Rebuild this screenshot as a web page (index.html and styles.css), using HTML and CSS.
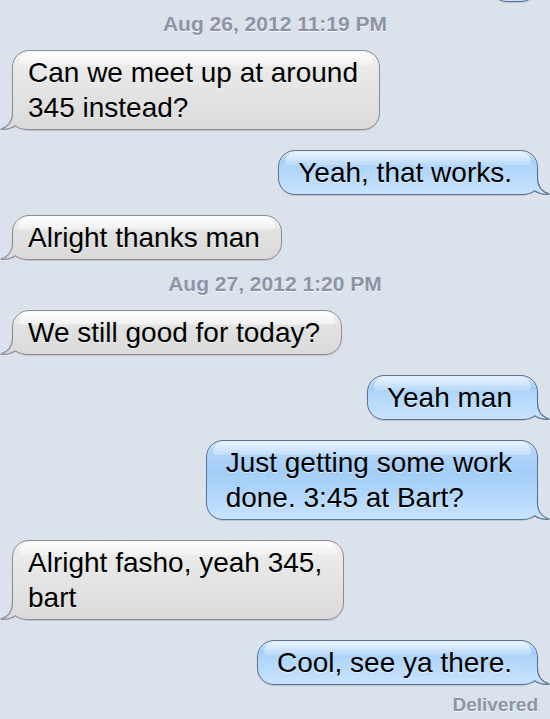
FILE: index.html
```html
<!DOCTYPE html>
<html lang="en">
<head>
<meta charset="utf-8">
<title>Messages</title>
<link rel="stylesheet" href="styles.css">
</head>
<body>
<svg class="defs" width="0" height="0" aria-hidden="true">
  <defs>
    <linearGradient id="gGrey" gradientUnits="userSpaceOnUse" x1="0" y1="-1" x2="0" y2="29">
      <stop offset="0" stop-color="#e2e2e2"/>
      <stop offset="1" stop-color="#dadada"/>
    </linearGradient>
    <linearGradient id="gBlue" gradientUnits="userSpaceOnUse" x1="0" y1="-1" x2="0" y2="29">
      <stop offset="0" stop-color="#acd3f9"/>
      <stop offset="1" stop-color="#c8e3fd"/>
    </linearGradient>
  </defs>
</svg>

<div class="thread">
  <div class="msg sent prev">
    <div class="bubble"><span class="text">&nbsp;</span></div>
  </div>

  <div class="stamp first">Aug 26, 2012 11:19 PM</div>

  <div class="msg recv">
    <div class="bubble">
      <svg class="tail" viewBox="0 0 32 30"><path class="tail-fill" d="M12.5 6 V13 C12.5 21 9 26.5 0.5 29.3 C6 29.9 11.5 28.4 15.5 25.8 C18.5 28.3 22 29.5 28 29.5 L32 29.5 L32 6 Z"/><path class="tail-line" d="M12.5 6 V13 C12.5 21 9 26.5 0.5 29.3 C6 29.9 11.5 28.4 15.5 25.8 C18.5 28.3 22 29.5 28 29.5 L32 29.5"/></svg>
      <span class="text">Can we meet up at around<br>345 instead?</span>
    </div>
  </div>

  <div class="msg sent">
    <div class="bubble">
      <svg class="tail" viewBox="0 0 32 30"><path class="tail-fill" d="M12.5 6 V13 C12.5 21 9 26.5 0.5 29.3 C6 29.9 11.5 28.4 15.5 25.8 C18.5 28.3 22 29.5 28 29.5 L32 29.5 L32 6 Z"/><path class="tail-line" d="M12.5 6 V13 C12.5 21 9 26.5 0.5 29.3 C6 29.9 11.5 28.4 15.5 25.8 C18.5 28.3 22 29.5 28 29.5 L32 29.5"/></svg>
      <span class="text">Yeah, that works.</span>
    </div>
  </div>

  <div class="msg recv">
    <div class="bubble">
      <svg class="tail" viewBox="0 0 32 30"><path class="tail-fill" d="M12.5 6 V13 C12.5 21 9 26.5 0.5 29.3 C6 29.9 11.5 28.4 15.5 25.8 C18.5 28.3 22 29.5 28 29.5 L32 29.5 L32 6 Z"/><path class="tail-line" d="M12.5 6 V13 C12.5 21 9 26.5 0.5 29.3 C6 29.9 11.5 28.4 15.5 25.8 C18.5 28.3 22 29.5 28 29.5 L32 29.5"/></svg>
      <span class="text">Alright thanks man</span>
    </div>
  </div>

  <div class="stamp">Aug 27, 2012 1:20 PM</div>

  <div class="msg recv">
    <div class="bubble">
      <svg class="tail" viewBox="0 0 32 30"><path class="tail-fill" d="M12.5 6 V13 C12.5 21 9 26.5 0.5 29.3 C6 29.9 11.5 28.4 15.5 25.8 C18.5 28.3 22 29.5 28 29.5 L32 29.5 L32 6 Z"/><path class="tail-line" d="M12.5 6 V13 C12.5 21 9 26.5 0.5 29.3 C6 29.9 11.5 28.4 15.5 25.8 C18.5 28.3 22 29.5 28 29.5 L32 29.5"/></svg>
      <span class="text">We still good for today?</span>
    </div>
  </div>

  <div class="msg sent">
    <div class="bubble">
      <svg class="tail" viewBox="0 0 32 30"><path class="tail-fill" d="M12.5 6 V13 C12.5 21 9 26.5 0.5 29.3 C6 29.9 11.5 28.4 15.5 25.8 C18.5 28.3 22 29.5 28 29.5 L32 29.5 L32 6 Z"/><path class="tail-line" d="M12.5 6 V13 C12.5 21 9 26.5 0.5 29.3 C6 29.9 11.5 28.4 15.5 25.8 C18.5 28.3 22 29.5 28 29.5 L32 29.5"/></svg>
      <span class="text">Yeah man</span>
    </div>
  </div>

  <div class="msg sent">
    <div class="bubble">
      <svg class="tail" viewBox="0 0 32 30"><path class="tail-fill" d="M12.5 6 V13 C12.5 21 9 26.5 0.5 29.3 C6 29.9 11.5 28.4 15.5 25.8 C18.5 28.3 22 29.5 28 29.5 L32 29.5 L32 6 Z"/><path class="tail-line" d="M12.5 6 V13 C12.5 21 9 26.5 0.5 29.3 C6 29.9 11.5 28.4 15.5 25.8 C18.5 28.3 22 29.5 28 29.5 L32 29.5"/></svg>
      <span class="text">Just getting some work<br>done. 3:45 at Bart?</span>
    </div>
  </div>

  <div class="msg recv">
    <div class="bubble">
      <svg class="tail" viewBox="0 0 32 30"><path class="tail-fill" d="M12.5 6 V13 C12.5 21 9 26.5 0.5 29.3 C6 29.9 11.5 28.4 15.5 25.8 C18.5 28.3 22 29.5 28 29.5 L32 29.5 L32 6 Z"/><path class="tail-line" d="M12.5 6 V13 C12.5 21 9 26.5 0.5 29.3 C6 29.9 11.5 28.4 15.5 25.8 C18.5 28.3 22 29.5 28 29.5 L32 29.5"/></svg>
      <span class="text">Alright fasho, yeah 345,<br>bart</span>
    </div>
  </div>

  <div class="msg sent">
    <div class="bubble">
      <svg class="tail" viewBox="0 0 32 30"><path class="tail-fill" d="M12.5 6 V13 C12.5 21 9 26.5 0.5 29.3 C6 29.9 11.5 28.4 15.5 25.8 C18.5 28.3 22 29.5 28 29.5 L32 29.5 L32 6 Z"/><path class="tail-line" d="M12.5 6 V13 C12.5 21 9 26.5 0.5 29.3 C6 29.9 11.5 28.4 15.5 25.8 C18.5 28.3 22 29.5 28 29.5 L32 29.5"/></svg>
      <span class="text">Cool, see ya there.</span>
    </div>
  </div>

  <div class="delivered">Delivered</div>
</div>
</body>
</html>
```

FILE: styles.css
```css
html, body {
  margin: 0;
  padding: 0;
}

body {
  background: #dbe2ec;
  font-family: "Liberation Sans", Arial, Helvetica, sans-serif;
  overflow: hidden;
  width: 550px;
  height: 719px;
}

.defs {
  position: absolute;
  width: 0;
  height: 0;
}

.thread {
  display: flex;
  flex-direction: column;
  padding: 0 12px;
}

.msg {
  display: flex;
  margin-top: 20px;
}

.msg.recv {
  justify-content: flex-start;
}

.msg.sent {
  justify-content: flex-end;
}

.msg.prev {
  margin-top: -43px;
}

.prev .bubble {
  width: 48px;
}

.bubble {
  position: relative;
  box-sizing: border-box;
  border: 1px solid;
  border-radius: 17px;
  padding-top: 4px;
  padding-bottom: 4px;
  font-size: 28px;
  line-height: 35px;
  color: #000;
  white-space: nowrap;
  box-shadow: 0 1px 1px rgba(0, 0, 0, 0.14), inset 0 1px 0 rgba(255, 255, 255, 0.6);
}

.bubble::before {
  content: "";
  position: absolute;
  top: 1px;
  left: 6px;
  right: 6px;
  height: 13px;
  border-radius: 13px 13px 5px 5px;
}

.text {
  position: relative;
  text-shadow: 0 1px 0 rgba(255, 255, 255, 0.55);
}

.recv .bubble {
  padding-left: 15px;
  padding-right: 21px;
  border-color: #8a8d94;
  background: linear-gradient(to top, #dadada 0px, #e2e2e2 30px, #e8e8e8 70%, #efefef 100%);
}

.recv .bubble::before {
  background: linear-gradient(rgba(255, 255, 255, 0.9), rgba(255, 255, 255, 0.3));
}

.sent .bubble {
  padding-left: 19px;
  padding-right: 25px;
  border-color: #5b7093;
  background: linear-gradient(to top, #c8e3fd 0px, #acd3f9 30px, #a4cdf7 62%, #b7d9fb 100%);
}

.sent .bubble::before {
  background: linear-gradient(rgba(240, 248, 255, 0.85), rgba(230, 243, 255, 0.3));
}

.tail {
  position: absolute;
  bottom: -1px;
  width: 32px;
  height: 30px;
  overflow: visible;
}

.recv .tail {
  left: -13px;
}

.sent .tail {
  right: -13px;
  transform: scaleX(-1);
}

.tail-line {
  fill: none;
  stroke-width: 1.1;
}

.recv .tail-fill {
  fill: url(#gGrey);
}

.recv .tail-line {
  stroke: #8a8d94;
}

.sent .tail-fill {
  fill: url(#gBlue);
}

.sent .tail-line {
  stroke: #5b7093;
}

.stamp {
  margin-top: 12px;
  text-align: center;
  font-weight: bold;
  font-size: 21px;
  line-height: 24px;
  color: #8c94a6;
  text-shadow: 0 1px 0 rgba(255, 255, 255, 0.8);
}

.stamp.first {
  margin-top: 10px;
}

.stamp + .msg {
  margin-top: 14px;
}

.delivered {
  margin-top: 9px;
  text-align: right;
  font-weight: bold;
  font-size: 19px;
  line-height: 22px;
  color: #8c94a6;
  text-shadow: 0 1px 0 rgba(255, 255, 255, 0.8);
}
```
